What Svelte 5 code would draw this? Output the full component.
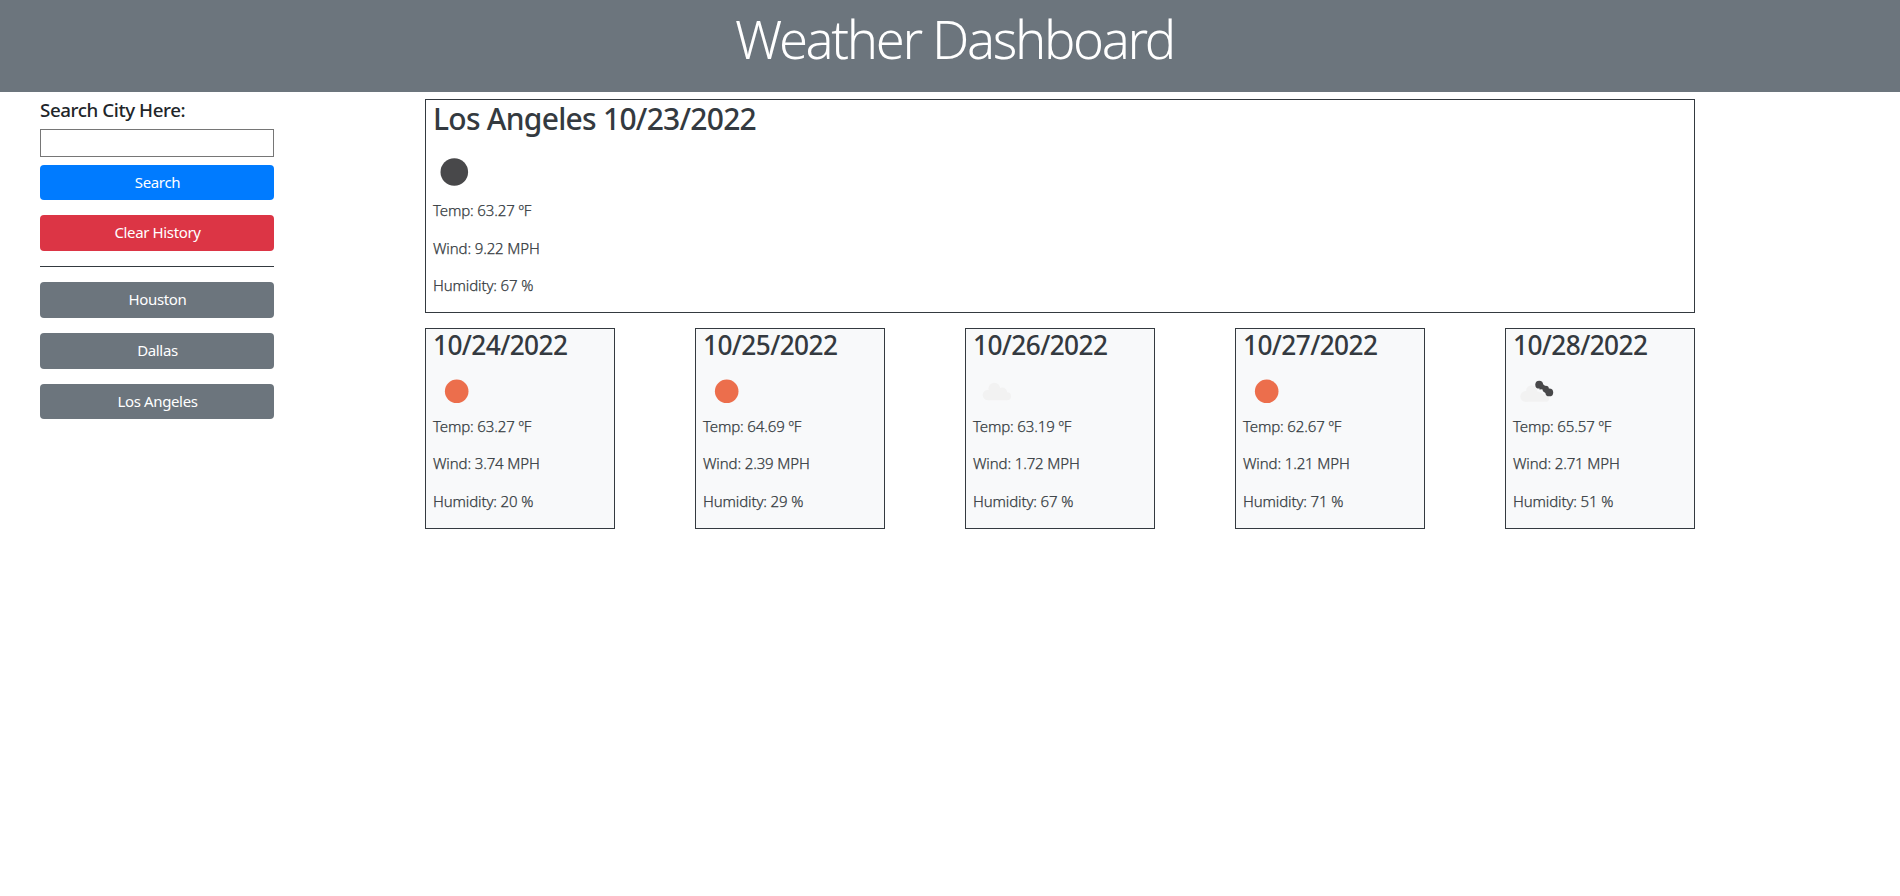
<script>
  const current = { city: 'Los Angeles', date: '10/23/2022', temp: '63.27', wind: '9.22', humidity: 67 };

  const forecast = [
    { date: '10/24/2022', icon: 'sun', temp: '63.27', wind: '3.74', humidity: 20 },
    { date: '10/25/2022', icon: 'sun', temp: '64.69', wind: '2.39', humidity: 29 },
    { date: '10/26/2022', icon: 'cloud', temp: '63.19', wind: '1.72', humidity: 67 },
    { date: '10/27/2022', icon: 'sun', temp: '62.67', wind: '1.21', humidity: 71 },
    { date: '10/28/2022', icon: 'broken', temp: '65.57', wind: '2.71', humidity: 51 }
  ];

  const history = ['Houston', 'Dallas', 'Los Angeles'];
  let query = $state('');
</script>

{#snippet readings(d)}
  <p>Temp: {d.temp} ºF</p>
  <p>Wind: {d.wind} MPH</p>
  <p>Humidity: {d.humidity} %</p>
{/snippet}

<header><h1>Weather Dashboard</h1></header>

<div class="page">
  <aside>
    <label for="city">Search City Here:</label>
    <input id="city" type="text" bind:value={query} />
    <button class="search">Search</button>
    <button class="clear">Clear History</button>
    <hr />
    {#each history as city}
      <button>{city}</button>
    {/each}
  </aside>

  <main>
    <section class="today">
      <h2>{current.city} {current.date}</h2>
      <svg width="60" height="55" viewBox="0 0 60 55"><circle cx="21.3" cy="28" r="13.8" fill="#48484a" /></svg>
      {@render readings(current)}
    </section>

    <div class="days">
      {#each forecast as day}
        <section class="day">
          <h3>{day.date}</h3>
          <svg width="48" height="46" viewBox="0 0 48 46">
            {#if day.icon === 'sun'}
              <circle cx="23.7" cy="22.3" r="11.8" fill="#ec6e4c" />
            {:else if day.icon === 'cloud'}
              <g fill="#f2f2f2" transform="translate(1 -1.4)">
                <circle cx="14" cy="27.4" r="5.3" />
                <circle cx="20.3" cy="21" r="5.9" />
                <circle cx="28.3" cy="24.7" r="4.8" />
                <circle cx="33" cy="28.7" r="4" />
                <path d="M14 32.7V23l6-3 8 4 5 5v3.7z" />
              </g>
            {:else}
              <g fill="#f2f2f2" transform="translate(-1.4 0)">
                <circle cx="14" cy="27.4" r="5.3" />
                <circle cx="20" cy="21.7" r="5.5" />
                <path d="M14 32.7V23l6-4 5 3 5 2 7 4a3 3 0 0 1-2 4.700z" />
              </g>
              <g fill="#48484a" transform="translate(1 -1.4)">
                <circle cx="25.2" cy="17.1" r="3.9" />
                <circle cx="31.7" cy="21.3" r="3.2" />
                <circle cx="35.3" cy="24.8" r="3.9" />
                <path d="M21.4 17l4.400 2.200-.4 2.800 3.200-.3 1.600 3 3.300 1.800 3-3-7-6.500z" />
              </g>
            {/if}
          </svg>
          {@render readings(day)}
        </section>
      {/each}
    </div>
  </main>
</div>

<style>
  :global(body) {
    background: #fff;
    color: #212529;
    font: 400 15px/22.5px "Noto Sans", "Open Sans", sans-serif;
  }
  header {
    box-sizing: border-box;
    height: 92px;
    padding: 7px 0 0 9px;
    background: #6c757d;
    text-align: center;
  }
  h1 {
    margin: 0;
    color: #fff;
    font-size: 52.5px;
    font-weight: 300;
    line-height: 63px;
    letter-spacing: -2.35px;
  }
  .page {
    display: flex;
    padding: 7px 0 0 40px;
  }
  aside {
    display: flex;
    flex-direction: column;
    width: 234px;
    margin-right: 151px;
  }
  label {
    margin-bottom: 7.5px;
    font-size: 18.75px;
    font-weight: 500;
    line-height: 22.5px;
    letter-spacing: -0.42px;
  }
  input {
    box-sizing: border-box;
    height: 28px;
    margin: 0 0 8px;
    border: 1px solid #767676;
    font: inherit;
  }
  button {
    height: 36px;
    margin: 0 0 15px;
    padding: 0 0 1px 1px;
    border: 0;
    border-radius: 4px;
    background: #6c757d;
    color: #fff;
    font: inherit;
    letter-spacing: -0.36px;
  }
  .search,
  button:last-child {
    height: 35px;
  }
  .search {
    background: #007bff;
  }
  .clear {
    background: #dc3545;
  }
  hr {
    width: 100%;
    height: 1px;
    margin: 0 0 15px;
    border: 0;
    background: #343a40;
  }
  main {
    width: 1270px;
  }
  section {
    box-sizing: border-box;
    border: 1px solid #343a40;
    color: #343a40;
    padding: 1px 7px 0;
  }
  .today {
    height: 214px;
    margin-bottom: 15px;
  }
  .days {
    display: flex;
    justify-content: space-between;
  }
  .day {
    width: 190px;
    height: 201px;
    background: #f8f9fa;
  }
  h2,
  h3 {
    margin: 0 0 7px;
    font-weight: 500;
  }
  h2 {
    font-size: 30px;
    line-height: 36px;
    letter-spacing: -0.73px;
  }
  h3 {
    font-size: 26.25px;
    line-height: 31.5px;
    letter-spacing: -0.6px;
  }
  svg {
    display: block;
  }
  p {
    margin: 0 0 15px;
    font-weight: 300;
    letter-spacing: -0.13px;
    -webkit-text-stroke: 0.25px #343a40;
  }
</style>
